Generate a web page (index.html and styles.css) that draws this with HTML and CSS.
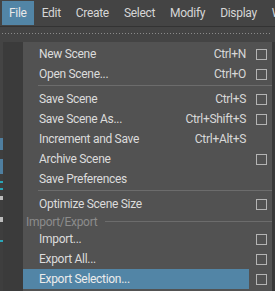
FILE: index.html
```html
<!DOCTYPE html>
<html lang="en">
<head>
    <meta charset="utf-8">
    <link rel="stylesheet" href="styles.css">
</head>
<body>
    <div class="menubar">
        <span class="menubar-item active">File</span>
        <span class="menubar-item">Edit</span>
        <span class="menubar-item">Create</span>
        <span class="menubar-item">Select</span>
        <span class="menubar-item">Modify</span>
        <span class="menubar-item">Display</span>
        <span class="menubar-item">Windows</span>
    </div>
    <div class="toolbar">
        <div class="dots"></div>
    </div>

    <div class="workspace">
        <div class="side">
            <div class="side-strip"></div>
        </div>

        <div class="menu">
            <div class="item">
                <div class="item-main"><span>New Scene</span><span class="shortcut">Ctrl+N</span></div>
                <div class="option"><span class="box"></span></div>
            </div>
            <div class="item">
                <div class="item-main"><span>Open Scene...</span><span class="shortcut">Ctrl+O</span></div>
                <div class="option"><span class="box"></span></div>
            </div>
            <div class="separator"></div>
            <div class="item">
                <div class="item-main"><span>Save Scene</span><span class="shortcut">Ctrl+S</span></div>
                <div class="option"><span class="box"></span></div>
            </div>
            <div class="item">
                <div class="item-main"><span>Save Scene As...</span><span class="shortcut">Ctrl+Shift+S</span></div>
                <div class="option"><span class="box"></span></div>
            </div>
            <div class="item">
                <div class="item-main"><span>Increment and Save</span><span class="shortcut">Ctrl+Alt+S</span></div>
                <div class="option"></div>
            </div>
            <div class="item">
                <div class="item-main"><span>Archive Scene</span></div>
                <div class="option"><span class="box"></span></div>
            </div>
            <div class="item">
                <div class="item-main"><span>Save Preferences</span></div>
                <div class="option"></div>
            </div>
            <div class="separator"></div>
            <div class="item">
                <div class="item-main"><span>Optimize Scene Size</span></div>
                <div class="option"><span class="box"></span></div>
            </div>
            <div class="section">
                <span>Import/Export</span>
                <span class="section-line"></span>
            </div>
            <div class="item">
                <div class="item-main"><span>Import...</span></div>
                <div class="option"><span class="box"></span></div>
            </div>
            <div class="item">
                <div class="item-main"><span>Export All...</span></div>
                <div class="option"><span class="box"></span></div>
            </div>
            <div class="item">
                <div class="item-main hover"><span>Export Selection...</span></div>
                <div class="option"><span class="box"></span></div>
            </div>
        </div>

        <div class="edge"></div>
    </div>
</body>
</html>
```

FILE: styles.css
```css
* {
    margin: 0;
    padding: 0;
    box-sizing: border-box;
}
body {
    width: 275px;
    height: 291px;
    overflow: hidden;
    background-color: #3a3a3a;
    font-family: Roboto, 'Noto Sans', sans-serif;
    font-size: 12px;
    letter-spacing: -0.3px;
    color: #dcdcdc;
    display: flex;
    flex-direction: column;
}

/* top menu bar */
.menubar {
    display: flex;
    height: 27px;
    padding: 1px 0 1px 2px;
    background-color: #444444;
    border-bottom: 1px solid #333333;
    white-space: nowrap;
    overflow: hidden;
}
.menubar-item {
    display: flex;
    align-items: center;
    padding: 0 7px;
    margin-right: 1px;
    color: #d6d6d6;
}
.menubar-item.active {
    background-color: #5285a6;
    color: #e8e8e8;
}

/* shelf strip with the dotted handle */
.toolbar {
    height: 15px;
    background-color: #444444;
    padding: 6px 3px 0 2px;
}
.dots {
    height: 1px;
    background-image: linear-gradient(to right, #8a8a8a 1px, transparent 1px);
    background-size: 3px 1px;
}

.workspace {
    flex: 1;
    display: flex;
}
.side {
    width: 23px;
    background-color: #3b3b3b;
    display: flex;
}
.side-strip {
    width: 3px;
    background: linear-gradient(to bottom,
        #444 0, #444 96px,
        #4f7fa0 96px, #4f7fa0 108px,
        #3e3e3e 108px, #3e3e3e 117px,
        #4f7fa0 117px, #4f7fa0 132px,
        #3e3e3e 132px, #3e3e3e 139px,
        #2aa6b8 139px, #2aa6b8 141px,
        #3e3e3e 141px, #3e3e3e 146px,
        #2aa6b8 146px, #2aa6b8 148px,
        #3e3e3e 148px, #3e3e3e 154px,
        #bcbcbc 154px, #bcbcbc 158px,
        #3e3e3e 158px, #3e3e3e 175px,
        #bcbcbc 175px, #bcbcbc 180px,
        #3e3e3e 180px, #3e3e3e 198px,
        #2aa6b8 198px, #2aa6b8 200px,
        #3e3e3e 200px);
}
.edge {
    width: 3px;
    background-color: #383838;
}

/* the File drop-down */
.menu {
    flex: 1;
    background-color: #525252;
    padding-top: 2px;
}
.item {
    display: grid;
    grid-template-columns: 1fr 23px;
    height: 20px;
    line-height: 20px;
}
.item-main {
    display: flex;
    justify-content: space-between;
    padding: 0 3px 0 16px;
    white-space: nowrap;
}
.item-main.hover {
    background-color: #5285a6;
    color: #ececec;
}
.shortcut {
    color: #d8d8d8;
}
.option {
    display: flex;
    align-items: center;
    padding-left: 7px;
}
.box {
    width: 11px;
    height: 11px;
    border: 1px solid #b4b4b4;
}
.separator {
    height: 5px;
    margin-left: 15px;
    padding-top: 1px;
}
.separator::before {
    content: '';
    display: block;
    height: 1px;
    background-color: #6c6c6c;
}
.section {
    display: flex;
    align-items: center;
    height: 15px;
    line-height: 14px;
    padding-left: 3px;
    color: #8c8c8c;
}
.section-line {
    flex: 1;
    height: 1px;
    margin-left: 8px;
    background-color: #6c6c6c;
}
```
